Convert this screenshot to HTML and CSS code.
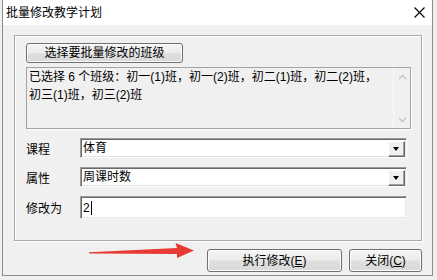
FILE: index.html
```html
<!DOCTYPE html>
<html lang="zh-CN">
<head>
    <meta charset="UTF-8">
    <title>批量修改教学计划</title>
    <link rel="stylesheet" href="styles.css">
</head>
<body>
    <div class="window">
        <div class="titlebar">
            <span class="title">批量修改教学计划</span>
            <svg class="close-x" width="11" height="11" viewBox="0 0 11 11"><path d="M0.5 0.5 L10.5 10.5 M10.5 0.5 L0.5 10.5" stroke="#000" stroke-width="1.1" fill="none"/></svg>
        </div>
        <div class="client">
            <div class="group">
                <button class="btn select-btn">选择要批量修改的班级</button>
                <div class="classlist">
                    <div class="classlist-text">已选择 6 个班级：初一(1)班，初一(2)班，初二(1)班，初二(2)班，<br>初三(1)班，初三(2)班</div>
                    <div class="vscroll">
                        <svg width="9" height="6" viewBox="0 0 9 6"><path d="M1 5 L4.5 1.5 L8 5" stroke="#c4c4c4" stroke-width="1.3" fill="none"/></svg>
                        <svg width="9" height="6" viewBox="0 0 9 6"><path d="M1 1 L4.5 4.5 L8 1" stroke="#c4c4c4" stroke-width="1.3" fill="none"/></svg>
                    </div>
                </div>
                <div class="form-row">
                    <span class="label">课程</span>
                    <div class="field combo"><span class="value">体育</span><span class="drop"></span></div>
                </div>
                <div class="form-row">
                    <span class="label">属性</span>
                    <div class="field combo"><span class="value">周课时数</span><span class="drop"></span></div>
                </div>
                <div class="form-row">
                    <span class="label">修改为</span>
                    <div class="field input"><span class="value">2</span><span class="caret"></span></div>
                </div>
            </div>
            <div class="actions">
                <button class="btn run-btn">执行修改(<u>E</u>)</button>
                <button class="btn close-btn">关闭(<u>C</u>)</button>
            </div>
        </div>
        <svg class="arrow" width="437" height="280" viewBox="0 0 437 280">
            <polygon points="88,252.2 176,248 174.5,243 193,250.5 176,258 176,254 88,253.4" fill="#e83b36"/>
        </svg>
    </div>
</body>
</html>
```

FILE: styles.css
```css
body { margin: 0; background: #efefef; font-family: "Liberation Sans", "Noto Sans CJK SC", sans-serif; font-size: 12px; color: #000; }
.window { position: relative; margin-left: 2px; width: 429px; height: 275px; border: 1px solid #8c8c8c; border-top: none; background: #f0f0f0; display: flex; flex-direction: column; }
.titlebar { height: 25px; background: #fff; display: flex; align-items: center; justify-content: space-between; padding-left: 3px; }
.title { font-size: 12px; line-height: 16px; }
.close-x { margin-right: 7px; }
.client { flex: 1; padding: 10px 10px 0 11px; display: flex; flex-direction: column; }
.group { height: 197px; border: 1px solid #a9a9a9; box-shadow: inset 1px 1px 0 #fff, 1px 1px 0 #fff; padding: 7px 0 0 11px; display: flex; flex-direction: column; }
.btn { font-family: inherit; font-size: 12px; color: #000; border: 1px solid #707070; border-radius: 3px; background: linear-gradient(#f4f4f4 0%, #ececec 48%, #dfdfdf 52%, #d9d9d9 100%); box-shadow: inset 0 0 0 1px #fbfbfb; padding: 0; line-height: 16px; }
.select-btn { width: 157px; height: 20px; }
.classlist { margin-top: 4px; width: 383px; height: 60px; border: 1px solid #a3a3a3; box-shadow: 1px 1px 0 #fff; display: flex; background: #f0f0f0; }
.classlist-text { flex: 1; padding: 0 0 0 2px; line-height: 18px; white-space: nowrap; }
.vscroll { width: 16px; border-left: 1px solid #fafafa; display: flex; flex-direction: column; justify-content: space-between; align-items: center; padding: 6px 0 5px; }
.form-row { display: flex; align-items: center; margin-top: 9px; }
.label { width: 54px; }
.field { width: 325px; background: #fff; border-top: 1px solid #9a9a9a; border-left: 1px solid #9a9a9a; border-right: 1px solid #fff; border-bottom: 1px solid #fff; box-shadow: inset 1px 1px 0 #6a6a6a, inset -1px -1px 0 #e3e3e3; display: flex; align-items: center; }
.combo { height: 18px; }
.input { height: 21px; box-shadow: inset 1px 1px 0 #6a6a6a, inset -1px -1px 0 #e8e8e8; border-right-color: #f4f4f4; border-bottom-color: #f4f4f4; }
.value { flex: 1; padding-left: 2px; line-height: 16px; }
.input .value { flex: none; }
.caret { width: 1px; height: 14px; background: #000; margin-left: 1px; }
.drop { width: 17px; height: 16px; margin-right: 1px; margin-top: 1px; background: #f0f0f0; border-top: 1px solid #fff; border-left: 1px solid #fff; border-right: 1px solid #696969; border-bottom: 1px solid #696969; box-sizing: border-box; box-shadow: inset -1px -1px 0 #a0a0a0; position: relative; }
.drop::after { content: ""; position: absolute; left: 4px; top: 5px; border-left: 3.5px solid transparent; border-right: 3.5px solid transparent; border-top: 4px solid #000; }
.actions { display: flex; justify-content: flex-end; gap: 7px; margin-top: 8px; padding-right: 0; }
.run-btn { width: 135px; height: 23px; }
.close-btn { width: 73px; height: 23px; }
.arrow { position: absolute; left: -2px; top: 0; pointer-events: none; }
```
